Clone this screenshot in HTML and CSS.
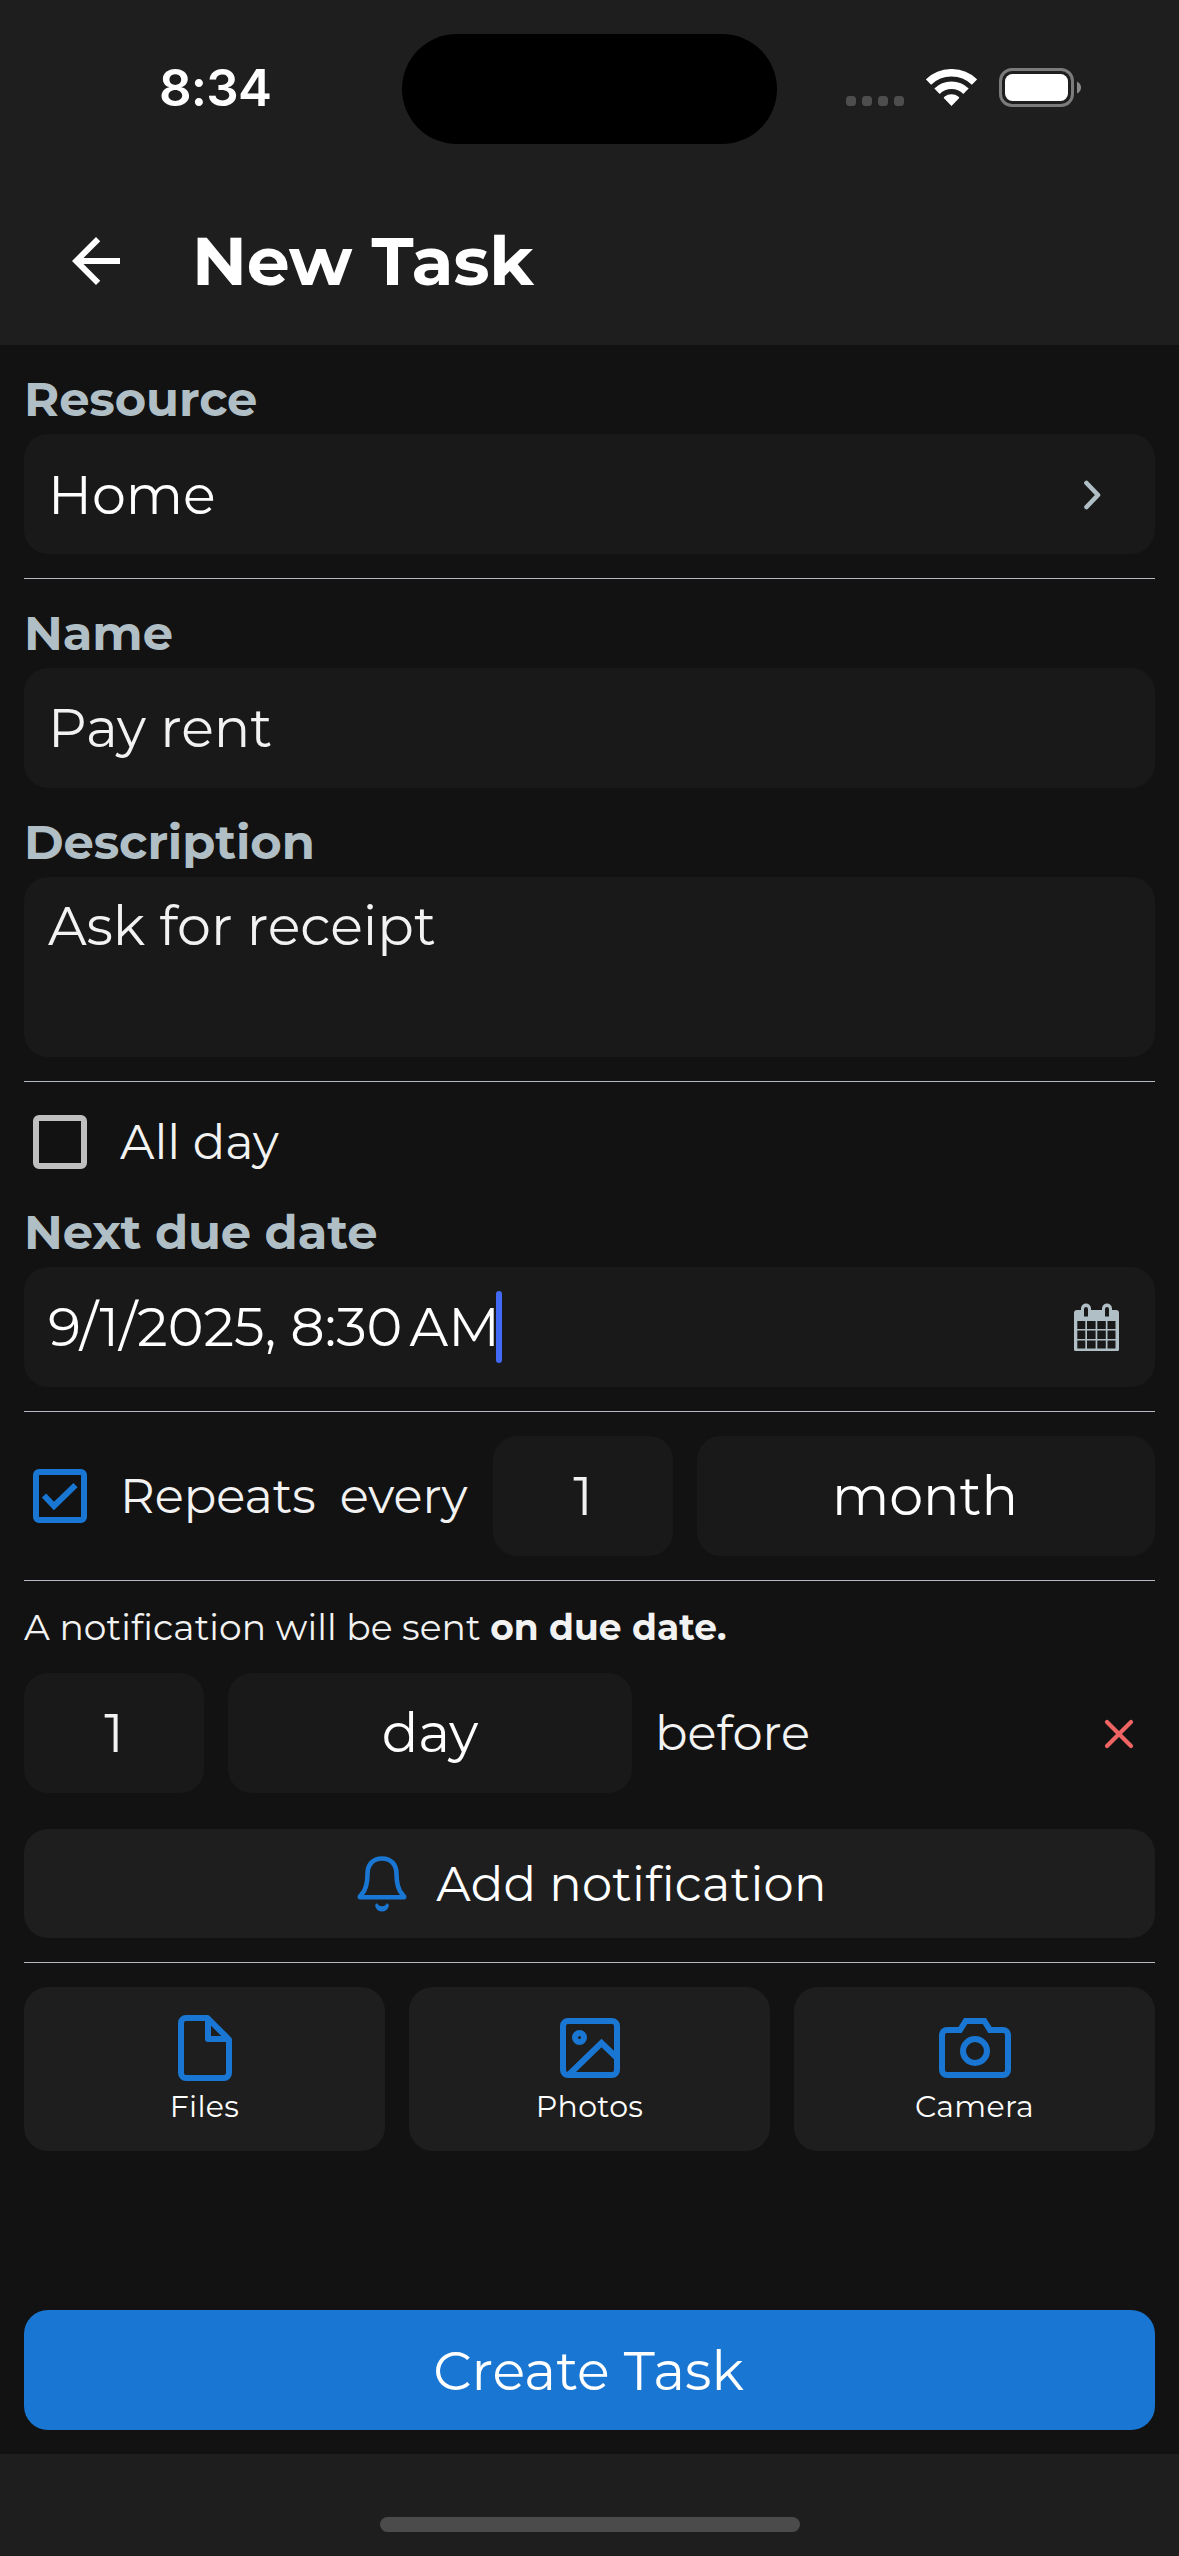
FILE: index.html
```html
<!DOCTYPE html>
<html lang="en">
<head>
<meta charset="utf-8">
<title>New Task</title>
<link rel="stylesheet" href="styles.css">
</head>
<body>
<div class="screen">
  <div class="status-bar">
    <span class="time">8:34</span>
    <div class="island"></div>
    <div class="signals">
      <div class="dots"><i></i><i></i><i></i><i></i></div>
      <svg class="wifi" width="51" height="38" viewBox="0 0 51 38">
        <g fill="none" stroke="#fff">
          <path stroke-width="7.5" d="M2.5 13 A33.2 33.2 0 0 1 48.5 13"/>
          <path stroke-width="7.7" d="M11 22.2 A20.7 20.7 0 0 1 40 22.2"/>
        </g>
        <path fill="#fff" d="M25.5 37 L18 29.3 Q17.3 28.4 18.4 27.7 A11.7 11.7 0 0 1 32.6 27.7 Q33.7 28.4 33 29.3 Z"/>
      </svg>
      <svg class="battery" width="82" height="39" viewBox="0 0 82 39">
        <rect x="1.5" y="1.5" width="72" height="36" rx="11.5" fill="none" stroke="#7b7b7b" stroke-width="3"/>
        <rect x="6" y="6" width="63" height="27" rx="7.5" fill="#fff"/>
        <path fill="#8a8a8a" d="M78 13.5 Q82 15.5 82 19.5 Q82 23.5 78 25.5 Z"/>
      </svg>
    </div>
  </div>

  <header class="header">
    <svg width="72" height="72" viewBox="0 0 24 24"><path fill="#fff" d="M20 11H7.83l5.59-5.59L12 4l-8 8 8 8 1.41-1.41L7.83 13H20v-2z"/></svg>
    <h1 class="title">New Task</h1>
  </header>

  <main class="form">
    <div class="label">Resource</div>
    <div class="field select">
      <span>Home</span>
      <svg width="72" height="72" viewBox="0 0 72 72"><path fill="none" stroke="#b0bec5" stroke-width="4.6" stroke-linecap="round" stroke-linejoin="round" d="M31.5 25 L43 37 L31.5 49"/></svg>
    </div>
    <div class="divider"></div>

    <div class="label">Name</div>
    <div class="field soft">Pay rent</div>
    <div class="label">Description</div>
    <div class="field area soft">Ask for receipt</div>
    <div class="divider"></div>

    <div class="check-row">
      <svg width="72" height="72" viewBox="0 0 72 72"><rect x="12" y="12" width="48" height="48" rx="3" fill="none" stroke="#bfbfbf" stroke-width="6"/></svg>
      <span>All day</span>
    </div>
    <div class="label flush">Next due date</div>
    <div class="field date">
      <span>9/1/2025, 8:30&#8239;AM</span><i class="caret"></i>
      <svg width="45" height="48" viewBox="0 0 45 48">
        <path fill="#b0bec5" fill-rule="evenodd" d="M3 7 H7 V5.5 A5 5 0 0 1 17 5.5 V7 H28 V5.5 A5 5 0 0 1 38 5.5 V7 H42 Q45 7 45 10 V46.5 Q45 48 43.5 48 H1.5 Q0 48 0 46.5 V10 Q0 7 3 7 Z
          M10 6 V13.5 H14 V6 A2 2 0 0 0 10 6 Z M31 6 V13.5 H35 V6 A2 2 0 0 0 31 6 Z
          M3.3 18 h8 v8 h-8 Z M13 18 h8.6 v8 h-8.6 Z M23.3 18 h8.5 v8 h-8.5 Z M33.5 18 h8 v8 h-8 Z
          M3.3 27.6 h8 v8.5 h-8 Z M13 27.6 h8.6 v8.5 h-8.6 Z M23.3 27.6 h8.5 v8.5 h-8.5 Z M33.5 27.6 h8 v8.5 h-8 Z
          M3.3 37.6 h8 v8 h-8 Z M13 37.6 h8.6 v8 h-8.6 Z M23.3 37.6 h8.5 v8 h-8.5 Z M33.5 37.6 h8 v8 h-8 Z"/>
      </svg>
    </div>
    <div class="divider"></div>

    <div class="row repeat">
      <svg width="72" height="72" viewBox="0 0 72 72">
        <g fill="none" stroke="#1976d2" stroke-width="6">
          <rect x="12" y="12" width="48" height="48" rx="3"/>
          <path d="M20 35.5 L30 46 L51.5 25.2"/>
        </g>
      </svg>
      <span>Repeats</span>
      <span>every</span>
      <div class="field number soft repeat-count">1</div>
      <div class="field unit-wide">month</div>
    </div>
    <div class="divider"></div>

    <p class="note">A notification will be sent <b>on due date.</b></p>
    <div class="row reminder">
      <div class="field number soft">1</div>
      <div class="field unit">day</div>
      <span>before</span>
      <svg class="remove" width="72" height="72" viewBox="0 0 72 72"><path fill="none" stroke="#f06464" stroke-width="4.2" stroke-linecap="round" d="M24 25 L48 49 M48 25 L24 49"/></svg>
    </div>
    <div class="add">
      <svg width="60" height="60" viewBox="0 0 60 60">
        <path fill="none" stroke="#1976d2" stroke-width="4.6" stroke-linejoin="round" d="M30 4.5 C20.5 4.5 15.5 11 15.5 20 C15.5 30 14 36 9.5 40.5 Q7 43.2 8.2 43.2 H51.8 Q53 43.2 50.5 40.5 C46 36 44.5 30 44.5 20 C44.5 11 39.5 4.5 30 4.5 Z"/>
        <path fill="#1976d2" d="M25.2 49.3 Q26.6 52.2 30 52.2 Q33.4 52.2 34.8 49.3 Q37.5 50 36.5 53 Q34.5 57.5 30 57.5 Q25.5 57.5 23.5 53 Q22.5 50 25.2 49.3 Z"/>
      </svg>
      <span>Add notification</span>
    </div>
    <div class="divider"></div>

    <div class="attachments">
      <div class="card">
        <svg width="72" height="72" viewBox="0 0 72 72">
          <g fill="none" stroke="#1976d2" stroke-width="6" stroke-linejoin="round">
            <path d="M17 6 H38.5 L60 27.5 V61 a5 5 0 0 1 -5 5 H17 a5 5 0 0 1 -5 -5 V11 a5 5 0 0 1 5 -5 Z"/>
            <path d="M39 7 V27 H59"/>
          </g>
        </svg>
        <span>Files</span>
      </div>
      <div class="card">
        <svg width="72" height="72" viewBox="0 0 72 72">
          <g fill="none" stroke="#1976d2" stroke-width="6">
            <rect x="9" y="9" width="54" height="54" rx="5"/>
            <circle cx="25.5" cy="25.5" r="4.5"/>
            <path d="M15 62.5 L47.5 31 L62 45"/>
          </g>
        </svg>
        <span>Photos</span>
      </div>
      <div class="card">
        <svg width="72" height="72" viewBox="0 0 72 72">
          <g fill="none" stroke="#1976d2" stroke-width="6">
            <path d="M8 18 H21 L26.7 9 H45.3 L51 18 H64 a5 5 0 0 1 5 5 V58 a5 5 0 0 1 -5 5 H8 a5 5 0 0 1 -5 -5 V23 a5 5 0 0 1 5 -5 Z"/>
            <circle cx="36" cy="39" r="12"/>
          </g>
        </svg>
        <span>Camera</span>
      </div>
    </div>

    <div class="create">Create Task</div>
  </main>

  <footer class="home-area"><div class="home-indicator"></div></footer>
</div>
</body>
</html>
```
FILE: styles.css
```css
* { box-sizing: border-box; }
body { margin: 0; background: #121212; }
svg { display: block; flex: none; }

.screen {
  width: 1179px;
  height: 2556px;
  display: flex;
  flex-direction: column;
  overflow: hidden;
  background: #121212;
  color: #fff;
  font-family: Montserrat, Inter, sans-serif;
  font-size: 48px;
  line-height: 60px;
}

.status-bar {
  height: 177px;
  background: #1e1e1e;
  display: grid;
  grid-template-columns: 402px 375px 402px;
  align-items: start;
  padding-top: 34px;
}
.time {
  padding: 24px 0 0 159px;
  font: 600 51px/60px Inter, sans-serif;
  letter-spacing: -0.8px;
}
.island { height: 110px; border-radius: 55px; background: #000; }
.signals { display: flex; padding: 34px 0 0 69px; }
.dots { display: flex; gap: 6px; padding-top: 28px; }
.dots i { width: 10px; height: 10px; border-radius: 3.5px; background: #4e4e4e; }
.wifi { margin: 1px 0 0 22px; }
.battery { margin-left: 22px; }

.header {
  height: 168px;
  background: #1e1e1e;
  display: flex;
  align-items: center;
  gap: 60px;
  padding-left: 60px;
}
.title { margin: 0; font-size: 68px; font-weight: 700; line-height: 84px; letter-spacing: -0.15px; }

.form { flex: 1; display: flex; flex-direction: column; padding: 0 24px 24px; }
.label { margin: 24px 0 5px; color: #b0bec5; font-weight: 700; letter-spacing: -0.1px; }
.label.flush { margin-top: 0; }
.divider { flex: none; height: 1px; margin-top: 24px; background: #b4b8bf; }

.field {
  height: 120px;
  flex: none;
  display: flex;
  align-items: center;
  padding: 0 24px;
  border-radius: 24px;
  background: #191919;
  font-size: 54px;
  line-height: 66px;
}
.soft { color: #f2f2f2; }
.select { justify-content: space-between; padding-right: 28px; }
.select span { padding-top: 2px; }
.area { height: 180px; align-items: flex-start; padding-top: 16px; }
.date { padding-right: 36px; }
.date svg { margin-left: auto; }
.caret { width: 6px; height: 72px; margin-left: -4px; border-radius: 3px; background: #4169f5; }

.check-row { height: 120px; display: flex; align-items: center; gap: 24px; color: #f2f2f2; }
.row { height: 120px; flex: none; display: flex; align-items: center; gap: 24px; margin-top: 24px; }
.row > span { color: #f2f2f2; }
.number { width: 180px; justify-content: center; }
.repeat-count { margin-left: auto; }
.unit { width: 404px; justify-content: center; }
.unit-wide { width: 458px; justify-content: center; padding-right: 26px; }
.remove { margin-left: auto; }
.reminder > span { margin-left: -1px; }

.note { margin: 24px 0 0; color: #f2f2f2; font-size: 36px; line-height: 44px; letter-spacing: 0.08px; }

.add {
  height: 109px;
  flex: none;
  display: flex;
  align-items: center;
  justify-content: center;
  gap: 24px;
  margin-top: 36px;
  border-radius: 24px;
  background: #1e1e1e;
  letter-spacing: 0.25px;
}

.attachments { display: grid; grid-template-columns: repeat(3, 1fr); gap: 24px; margin-top: 24px; }
.card {
  height: 164px;
  display: flex;
  flex-direction: column;
  align-items: center;
  gap: 5px;
  padding-top: 25px;
  border-radius: 24px;
  background: #1e1e1e;
  font-size: 30px;
  line-height: 36px;
  letter-spacing: 0.3px;
}

.create {
  height: 120px;
  margin-top: auto;
  display: flex;
  align-items: center;
  justify-content: center;
  padding: 2px 2px 0 0;
  border-radius: 24px;
  background: #1976d2;
  font-size: 54px;
}

.home-area { height: 102px; background: #1e1e1e; display: flex; justify-content: center; padding-top: 63px; }
.home-indicator { width: 420px; height: 15px; border-radius: 7.5px; background: #4b4b4b; }
```
